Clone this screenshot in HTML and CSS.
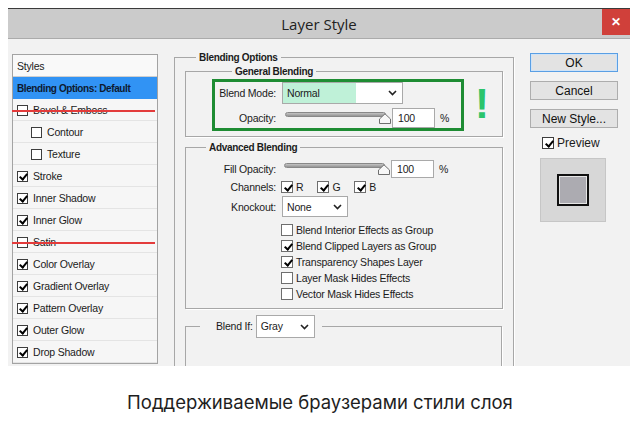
FILE: index.html
```html
<!DOCTYPE html>
<html lang="ru">
<head>
    <meta charset="UTF-8">
    <meta name="viewport" content="width=device-width, initial-scale=1.0">
    <title>Layer Style</title>
    <link rel="stylesheet" href="styles.css">
</head>
<body>
    <div class="dialog">
        <div class="titlebar">
            <span></span>
            <span class="title">Layer Style</span>
            <span class="close">&#x2715;</span>
        </div>

        <div class="dialog-body">
            <div class="styles-list">
                <div class="list-head">Styles</div>
                <div class="item active">Blending Options: Default</div>
                <div class="item struck"><span class="cb"></span>Bevel &amp; Emboss</div>
                <div class="item sub"><span class="cb"></span>Contour</div>
                <div class="item sub"><span class="cb"></span>Texture</div>
                <div class="item"><span class="cb on"></span>Stroke</div>
                <div class="item"><span class="cb on"></span>Inner Shadow</div>
                <div class="item"><span class="cb on"></span>Inner Glow</div>
                <div class="item struck"><span class="cb"></span>Satin</div>
                <div class="item"><span class="cb on"></span>Color Overlay</div>
                <div class="item"><span class="cb on"></span>Gradient Overlay</div>
                <div class="item"><span class="cb on"></span>Pattern Overlay</div>
                <div class="item"><span class="cb on"></span>Outer Glow</div>
                <div class="item"><span class="cb on"></span>Drop Shadow</div>
            </div>

            <fieldset class="group outer">
                <legend>Blending Options</legend>

                <fieldset class="group general">
                    <legend>General Blending</legend>
                    <div class="general-row">
                        <div class="highlight">
                            <span class="label">Blend Mode:</span>
                            <div class="select mode">
                                <span class="sel-value">Normal</span>
                                <svg class="chev" width="9" height="6" viewBox="0 0 9 6"><path d="M1 1l3.5 3.5L8 1" fill="none" stroke="#222" stroke-width="1.6"/></svg>
                            </div>
                            <span class="label">Opacity:</span>
                            <div class="value">
                                <div class="slider">
                                    <span class="track"></span>
                                    <svg class="thumb" width="12" height="11" viewBox="0 0 12 11"><path d="M0.5 10.5V6L6 0.8 11.5 6v4.5z" fill="#f7f7f7" stroke="#6f6f6f"/></svg>
                                </div>
                                <span class="num">100</span>
                                <span class="pct">%</span>
                            </div>
                        </div>
                        <span class="bang">!</span>
                    </div>
                </fieldset>

                <fieldset class="group advanced">
                    <legend>Advanced Blending</legend>
                    <div class="adv-grid">
                        <span class="label">Fill Opacity:</span>
                        <div class="value">
                            <div class="slider short">
                                <span class="track"></span>
                                <svg class="thumb" width="12" height="11" viewBox="0 0 12 11"><path d="M0.5 10.5V6L6 0.8 11.5 6v4.5z" fill="#f7f7f7" stroke="#6f6f6f"/></svg>
                            </div>
                            <span class="num small">100</span>
                            <span class="pct">%</span>
                        </div>

                        <span class="label">Channels:</span>
                        <div class="value channels">
                            <span class="cb big on"></span><span class="ch">R</span>
                            <span class="cb big on"></span><span class="ch">G</span>
                            <span class="cb big on"></span><span class="ch">B</span>
                        </div>

                        <span class="label">Knockout:</span>
                        <div class="value">
                            <div class="select knockout">
                                <span>None</span>
                                <svg class="chev" width="9" height="6" viewBox="0 0 9 6"><path d="M1 1l3.5 3.5L8 1" fill="none" stroke="#222" stroke-width="1.6"/></svg>
                            </div>
                        </div>

                        <div class="checks">
                            <div class="check"><span class="cb big"></span>Blend Interior Effects as Group</div>
                            <div class="check"><span class="cb big on"></span>Blend Clipped Layers as Group</div>
                            <div class="check"><span class="cb big on"></span>Transparency Shapes Layer</div>
                            <div class="check"><span class="cb big"></span>Layer Mask Hides Effects</div>
                            <div class="check"><span class="cb big"></span>Vector Mask Hides Effects</div>
                        </div>
                    </div>
                </fieldset>

                <fieldset class="group blend-if">
                    <legend>
                        <span class="label">Blend If:</span>
                        <div class="select gray">
                            <span>Gray</span>
                            <svg class="chev" width="9" height="6" viewBox="0 0 9 6"><path d="M1 1l3.5 3.5L8 1" fill="none" stroke="#222" stroke-width="1.6"/></svg>
                        </div>
                    </legend>
                </fieldset>
            </fieldset>

            <div class="actions">
                <div class="btn default">OK</div>
                <div class="btn">Cancel</div>
                <div class="btn">New Style...</div>
                <div class="preview-check"><span class="cb big on"></span>Preview</div>
                <div class="swatch"><span class="swatch-inner"></span></div>
            </div>
        </div>
    </div>

    <p class="caption">Поддерживаемые браузерами стили слоя</p>
</body>
</html>
```

FILE: styles.css
```css
* { box-sizing: border-box; }
body { margin: 0; background: #fff; font-family: "Liberation Sans", Arial, sans-serif; color: #1b1b1b; }

.dialog { width: 622px; margin: 8px 0 0 8px; border-top: 1px solid #3a3a3a; }
.titlebar { height: 30px; background: #cbcbcb; border-bottom: 1px solid #ababab; display: grid; grid-template-columns: 28px 1fr 28px; align-items: center; }
.title { text-align: center; font-family: "Open Sans", "Noto Sans", sans-serif; font-size: 15px; color: #222; }
.close { align-self: start; height: 26px; background: #d0403a; color: #fff; font-size: 12px; font-weight: bold; display: flex; align-items: center; justify-content: center; }

.dialog-body { height: 327px; overflow: hidden; background: #f2f2f2; display: flex; align-items: flex-start; padding-left: 4px; font-size: 10.5px; letter-spacing: -0.2px; }

/* styles list */
.styles-list { width: 146px; margin-top: 15px; border: 1px solid #a3a3a3; background: #f6f6f6; }
.list-head { height: 22px; padding-left: 4px; display: flex; align-items: center; background: #f9f9f9; border-bottom: 1px solid #cfcfcf; }
.item { position: relative; height: 22px; padding: 1px 0 0 4px; display: flex; align-items: center; border-bottom: 1px solid #e4e4e4; }
.item.active { background: #3193f4; border-bottom: none; padding-top: 0; font-weight: bold; font-size: 10px; letter-spacing: -0.4px; color: #0e1a30; }
.item.sub { padding-left: 18px; }
.item.struck::after { content: ""; position: absolute; left: -1px; right: 2px; top: 11px; height: 2px; background: #e33b3b; }

.cb { position: relative; flex: none; display: inline-block; width: 11px; height: 11px; margin-right: 5px; border: 1px solid #3d3d3d; background: #fff; }
.cb.big { width: 12px; height: 12px; border-color: #6e6e6e; margin-right: 3px; }
.cb.on::after { content: ""; position: absolute; left: 3px; top: 0; width: 3px; height: 6px; border: solid #000; border-width: 0 2px 2px 0; transform: rotate(40deg); }
.cb.big.on::after { left: 3.5px; top: 0.5px; }

/* fieldsets */
.group { margin: 0; padding: 0; min-width: 0; border: 1px solid #a7a7a7; box-shadow: 1px 1px 0 #fff; }
.group legend { padding: 0 3px; margin-left: 20px; line-height: 13px; font-weight: bold; font-size: 10px; letter-spacing: -0.3px; }
.outer { width: 340px; margin-top: 12px; margin-left: 16px; padding: 0 10px 40px; }
.outer > legend { margin-left: 11px; }
.general { margin-top: 1px; padding: 1px 0 5px 26px; }
.advanced { margin-top: 4px; padding: 6px 0 6px 0; }
.blend-if { width: 317px; margin-top: 6px; height: 90px; }
.blend-if legend { display: flex; align-items: center; margin-left: 14px; padding: 0 7px 0 16px; font-weight: normal; font-size: 10.5px; letter-spacing: -0.2px; }
.blend-if .label { margin-right: 3px; }

.general-row { display: flex; align-items: center; }
.highlight { width: 252px; height: 52px; border: 3px solid #1e8c33; display: grid; grid-template-columns: 61px auto; column-gap: 6px; row-gap: 4px; align-content: start; align-items: center; }
.label { text-align: right; }
.bang { margin-left: 11px; margin-top: -2px; font-size: 42px; line-height: 1; font-weight: bold; color: #2bc46b; }

.select { height: 22px; border: 1px solid #a9a9a9; background: #fff; display: flex; align-items: center; justify-content: space-between; padding-right: 5px; }
.select span { padding-left: 4px; }
.mode { width: 121px; }
.mode .sel-value { align-self: stretch; width: 73px; display: flex; align-items: center; background: #bff1d8; }
.knockout { width: 66px; height: 21px; margin-left: 1px; }
.gray { width: 59px; height: 23px; }

.value { display: flex; align-items: center; }
.slider { position: relative; width: 107px; height: 20px; margin-left: 3px; }
.slider.short { height: 18px; }
.track { position: absolute; left: 0; right: 6px; top: 4px; height: 5px; border: 1px solid #888; border-radius: 3px; background: linear-gradient(#c4c4c4, #949494); }
.thumb { position: absolute; right: 1px; top: 5px; }
.slider.short .track { top: 3px; }
.slider.short .thumb { top: 4px; }
.num { width: 43px; height: 20px; border: 1px solid #a9a9a9; background: #fff; padding-left: 5px; display: flex; align-items: center; }
.num.small { height: 18px; }
.pct { margin-left: 5px; }

.adv-grid { display: grid; grid-template-columns: 90px auto; column-gap: 5px; row-gap: 2px; align-items: center; }
.channels { height: 14px; }
.ch { margin-right: 14px; }
.checks { grid-column: 2; margin-top: 3px; }
.check { height: 16px; display: flex; align-items: center; }

/* buttons */
.actions { width: 88px; margin-left: 16px; margin-top: 14px; font-size: 12px; letter-spacing: 0; }
.btn { height: 19px; margin-bottom: 9px; border: 1px solid #adadad; background: #e3e3e3; display: flex; align-items: center; justify-content: center; color: #111; }
.btn.default { border-color: #5a9fe4; box-shadow: inset 0 0 0 1px #cfe3f7; }
.preview-check { padding-left: 12px; height: 12px; display: flex; align-items: center; }
.preview-check .cb { border-color: #3d3d3d; }
.swatch { width: 66px; height: 64px; margin: 9px 0 0 10px; border: 1px solid #c6c6c6; background: #d7d7d7; display: flex; align-items: center; justify-content: center; }
.swatch-inner { width: 32px; height: 32px; border: 2px solid #111; background: #acabb1; box-shadow: inset 0 0 0 1px #e6e6e6; }

.caption { margin: 25px 0 0; text-align: center; font-family: Inter, "Noto Sans", sans-serif; font-size: 18.5px; line-height: 22px; color: #1e1e1e; }
```
